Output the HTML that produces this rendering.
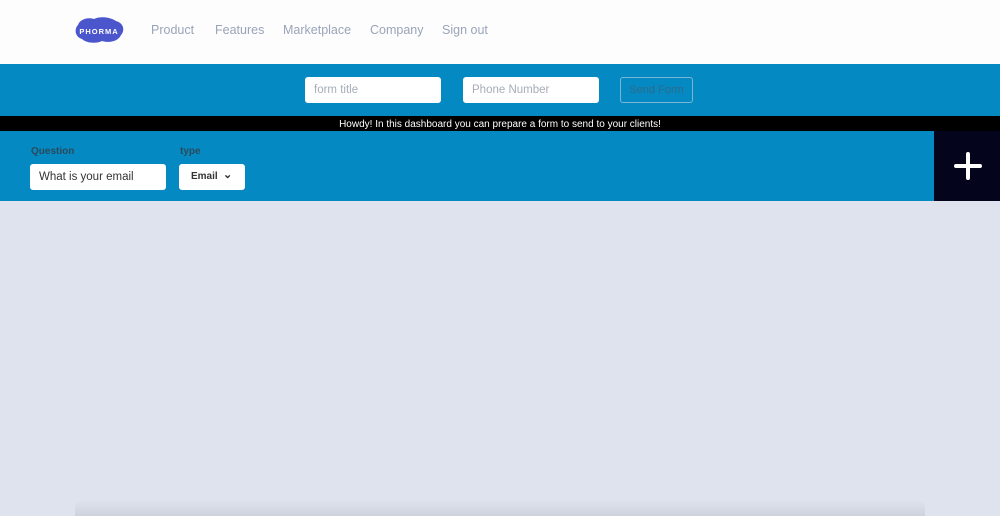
<!DOCTYPE html>
<html style="overflow:hidden;height:516px"><head><style>
body{margin:0;width:1000px;height:516px;overflow:hidden;background:#dfe3ee;font-family:"Liberation Sans",sans-serif;position:relative}
.hdr{position:absolute;left:0;top:0;width:1000px;height:64px;background:#fdfdfe}
.nav{position:absolute;top:23px;font-size:12.5px;color:#9aa4b8}
.bar{position:absolute;left:0;top:64px;width:1000px;height:52px;background:#0589c2}
.in{position:absolute;background:#fff;border-radius:3px;font-size:11.5px;color:#a6adb8;box-sizing:border-box;padding-left:9px;line-height:26px;height:26px}
.msg{position:absolute;left:0;top:116px;width:1000px;height:15px;background:#000;color:#fff;font-size:10px;text-align:center;line-height:17px}
.q{position:absolute;left:0;top:131px;width:934px;height:70px;background:#0589c2}
.plus{position:absolute;left:934px;top:131px;width:66px;height:70px;background:#04041c}
.lbl{position:absolute;font-size:10px;color:#2a4a5c;font-weight:bold}
.shadow{position:absolute;left:75px;top:500px;width:850px;height:16px;background:linear-gradient(#dfe3ee,#cfd3de);border-radius:8px 8px 0 0}
</style></head><body>
<div class="hdr">
<svg style="position:absolute;left:72px;top:15px" width="54" height="30" viewBox="0 0 54 30"><path d="M6 10 C8 4 16 2 22 4 C28 1 38 2 44 6 C52 8 53 16 49 20 C46 27 36 28 30 26 C24 29 14 28 10 24 C3 22 2 14 6 10Z" fill="#4b55cc"/><text x="27" y="19" text-anchor="middle" font-size="7.5" font-weight="bold" fill="#fff" letter-spacing="1" font-family="Liberation Sans">PHORMA</text></svg>
<span class="nav" style="left:151px">Product</span>
<span class="nav" style="left:215px">Features</span>
<span class="nav" style="left:283px">Marketplace</span>
<span class="nav" style="left:370px">Company</span>
<span class="nav" style="left:442px">Sign out</span>
</div>
<div class="bar">
<div class="in" style="left:305px;top:13px;width:136px">form title</div>
<div class="in" style="left:463px;top:13px;width:136px">Phone Number</div>
<div style="position:absolute;left:620px;top:13px;width:73px;height:26px;box-sizing:border-box;border:1px solid #7ab6d4;border-radius:3px;font-size:11px;color:#2e6a88;text-align:center;line-height:24px">Send Form</div>
</div>
<div class="msg">Howdy! In this dashboard you can prepare a form to send to your clients!</div>
<div class="q">
<span class="lbl" style="left:31px;top:15px">Question</span>
<span class="lbl" style="left:180px;top:15px">type</span>
<div class="in" style="left:30px;top:33px;width:136px;color:#333;font-size:11.5px">What is your email</div>
<div class="in" style="left:179px;top:33px;width:66px;color:#333;font-size:10px;font-weight:bold;padding-left:12px">Email <span style="position:absolute;left:44px;top:-2px;font-size:11px">&#8964;</span></div>
</div>
<div class="plus"><svg width="66" height="70"><path d="M34 23V47M22 35H46" stroke="#fff" stroke-width="4" stroke-linecap="round"/></svg></div>
<div class="shadow"></div>
</body></html>
